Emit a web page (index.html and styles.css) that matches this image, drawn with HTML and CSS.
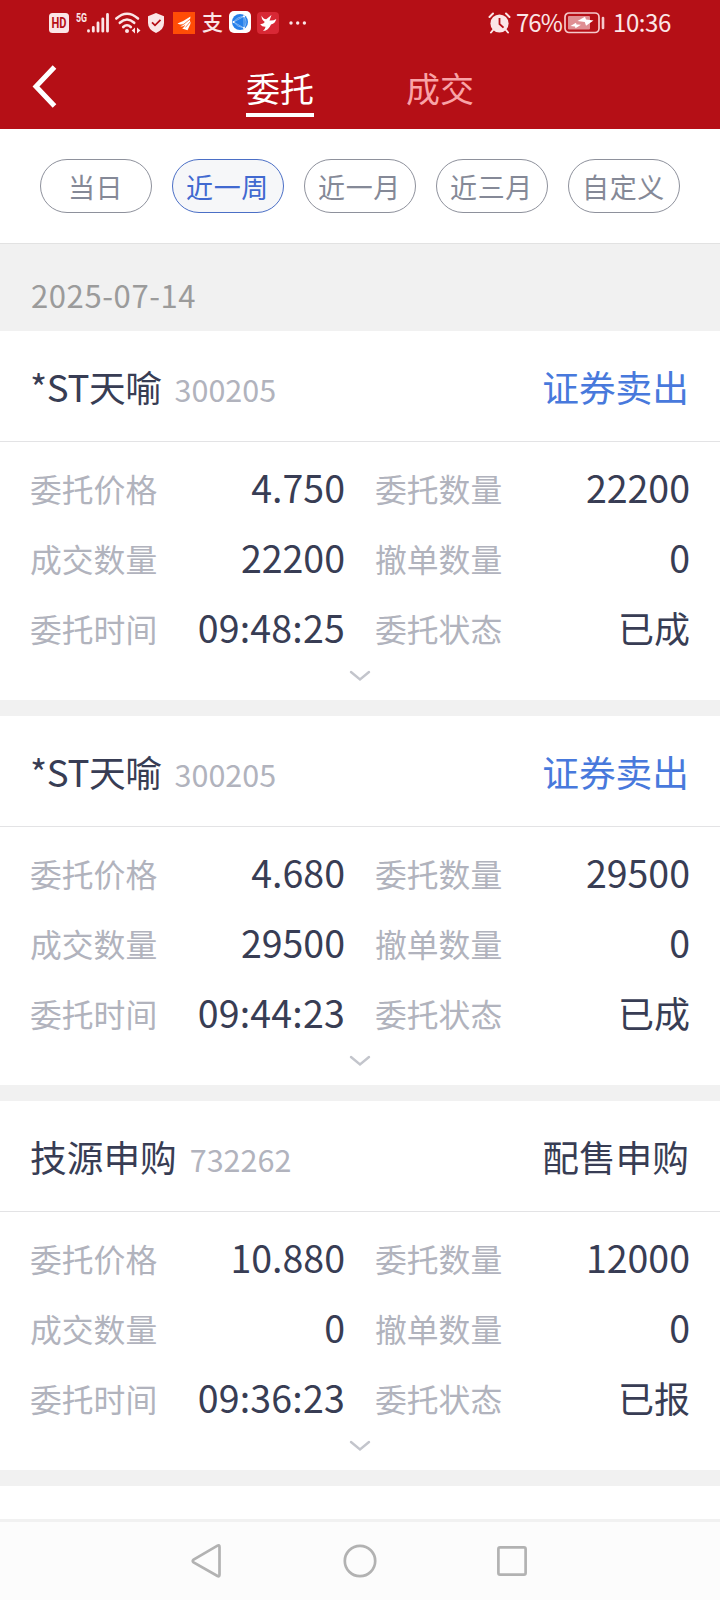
FILE: index.html
```html
<!DOCTYPE html>
<html lang="zh-CN">
<head>
<meta charset="utf-8">
<title>委托</title>
<link rel="stylesheet" href="styles.css">
</head>
<body>
<header class="top">
  <div class="status">
    <svg class="ic-hd" width="20" height="20" viewBox="0 0 20 20"><rect width="20" height="20" rx="3.5" fill="#fbe6e7"/><text class="hd" x="10" y="15" text-anchor="middle" textLength="15" lengthAdjust="spacingAndGlyphs" fill="#b50f16">HD</text></svg>
    <svg class="ic-signal" width="34" height="22" viewBox="0 0 34 22"><text class="gen" x="0" y="9.5" textLength="11" lengthAdjust="spacingAndGlyphs" fill="#fbe6e7">5G</text><g stroke="#fbe6e7" stroke-width="2.8" stroke-linecap="round"><path d="M12.5 18.6v.6M17.3 15.5v3.7M22 11v8.2M26.8 6.8v12.4M31.5 2.5v16.7"/></g></svg>
    <svg class="ic-wifi" width="26" height="22" viewBox="0 0 26 22"><g fill="none" stroke="#fbe6e7" stroke-width="2.6" stroke-linecap="round"><path d="M1.3 6.5Q12 -3 23 6.5M4.8 10.8Q12 4.2 19.2 10.8M8.2 15Q12 11.5 15.8 15"/></g><circle cx="12" cy="19" r="2" fill="#fbe6e7"/><path d="M20 15.5v6l-3.3-3zM22 15.5v6l3.5-3z" fill="#fbe6e7"/></svg>
    <svg class="ic-shield" width="16" height="20" viewBox="0 0 16 20"><path d="M8 0L16 3.3V10Q16 16.5 8 20Q0 16.5 0 10V3.3z" fill="#fbe6e7"/><path d="M4 9.3l3 3 5.5-5.4" fill="none" stroke="#b50f16" stroke-width="1.8"/></svg>
    <svg class="ic-orange" width="22" height="22" viewBox="0 0 22 22"><rect width="22" height="22" fill="#ff4d06"/><path d="M4.5 11.5Q11 9 17.5 4.5L16.8 8.8Q18 9.5 17.4 12L14.5 18.2L9.2 16.5Q11.5 15 12.3 12.7Q10 15 7.3 14.5Q9.6 13.4 10.4 11.5Q8 13.3 4.5 11.5z" fill="#fff"/><path d="M9.5 13.2L17 7.2M12.5 15.4L17.6 9.4" stroke="#ff4d06" stroke-width=".7"/></svg>
    <span class="zhi">支</span>
    <svg class="ic-globe" width="22" height="22" viewBox="0 0 22 22"><rect width="22" height="22" rx="5" fill="#fff"/><circle cx="11" cy="11" r="8" fill="#2680ea"/><path d="M4.5 11L15 5.3V17zM4.5 11Q8 6 15 5.3Q19 11 15 17Q8 16 4.5 11" fill="none" stroke="#a9cff8" stroke-width=".7"/><g fill="#fff"><circle cx="4.5" cy="11" r="1"/><circle cx="15" cy="5.3" r="1"/><circle cx="15" cy="17" r="1"/></g></svg>
    <svg class="ic-red" width="22" height="22" viewBox="0 0 22 22"><rect width="22" height="22" rx="4" fill="#d82835"/><path d="M4.5 3.5Q6 7 9.2 7.2L14.5 3L12.5 8.5Q16 9 19.3 7Q18.2 11.5 14 12.5Q11.5 18.5 6 19Q8 17.5 8.6 14.8Q5 15 3.2 12.2Q7 11.7 7.8 10Q4.5 8 4.5 3.5z" fill="#fff"/></svg>
    <svg class="ic-dots" width="18" height="4" viewBox="0 0 18 4"><g fill="#fbe6e7"><circle cx="2" cy="2" r="1.7"/><circle cx="8.7" cy="2" r="1.7"/><circle cx="15.4" cy="2" r="1.7"/></g></svg>
    <svg class="ic-alarm" width="23" height="22" viewBox="0 0 23 22"><circle cx="11.5" cy="11.5" r="9.1" fill="#fbe6e7"/><path d="M1.5 5L5 1.5M21.5 5L18 1.5M5 18L3 20.5M18 18L20 20.5" stroke="#fbe6e7" stroke-width="2" stroke-linecap="round"/><path d="M11.5 6v6l4 3.6" fill="none" stroke="#b50f16" stroke-width="1.8"/></svg>
    <span class="pct">76%</span>
    <svg class="ic-bat" width="41" height="22" viewBox="0 0 41 22"><rect x="1" y="1" width="34" height="19.5" rx="4" fill="none" stroke="#f5c9cb" stroke-width="1.7"/><rect x="4" y="4" width="22" height="13.5" rx="1" fill="#df8f93"/><path d="M6.5 14L12 10.8L12.5 12.5L17 12.8L11.5 16.3L11 14.4zM13.5 9L21 4.8L22 7.5L29.5 8.5L22 13.8L20.8 10z" fill="#fff"/><path d="M39 6v10" stroke="#f5c9cb" stroke-width="2.6" stroke-linecap="round"/></svg>
    <span class="clock">10:36</span>
  </div>
  <nav class="tabs">
    <svg class="back" width="26" height="44" viewBox="0 0 26 44"><path d="M23.5 2L5 21.5L23.5 41" fill="none" stroke="#fff" stroke-width="5"/></svg>
    <a class="tab tab-on">委托</a>
    <a class="tab">成交</a>
  </nav>
</header>
<section class="filters">
  <button class="pill">当日</button>
  <button class="pill pill-on">近一周</button>
  <button class="pill">近一月</button>
  <button class="pill">近三月</button>
  <button class="pill">自定义</button>
</section>
<div class="date">2025-07-14</div>
<main class="list">
  <article class="card">
    <div class="head"><span class="name latin">*ST天喻</span><span class="code">300205</span><span class="side sell">证券卖出</span></div>
    <div class="grid">
      <div class="cell"><span class="label">委托价格</span><span class="value">4.750</span></div>
      <div class="cell"><span class="label">委托数量</span><span class="value">22200</span></div>
      <div class="cell"><span class="label">成交数量</span><span class="value">22200</span></div>
      <div class="cell"><span class="label">撤单数量</span><span class="value">0</span></div>
      <div class="cell"><span class="label">委托时间</span><span class="value time">09:48:25</span></div>
      <div class="cell"><span class="label">委托状态</span><span class="value zh">已成</span></div>
    </div>
    <svg class="more" width="22" height="12" viewBox="0 0 22 12"><path d="M2 2l9 7.5L20 2" fill="none" stroke="#c3c5cc" stroke-width="2.4" stroke-linecap="round"/></svg>
  </article>
  <article class="card">
    <div class="head"><span class="name latin">*ST天喻</span><span class="code">300205</span><span class="side sell">证券卖出</span></div>
    <div class="grid">
      <div class="cell"><span class="label">委托价格</span><span class="value">4.680</span></div>
      <div class="cell"><span class="label">委托数量</span><span class="value">29500</span></div>
      <div class="cell"><span class="label">成交数量</span><span class="value">29500</span></div>
      <div class="cell"><span class="label">撤单数量</span><span class="value">0</span></div>
      <div class="cell"><span class="label">委托时间</span><span class="value time">09:44:23</span></div>
      <div class="cell"><span class="label">委托状态</span><span class="value zh">已成</span></div>
    </div>
    <svg class="more" width="22" height="12" viewBox="0 0 22 12"><path d="M2 2l9 7.5L20 2" fill="none" stroke="#c3c5cc" stroke-width="2.4" stroke-linecap="round"/></svg>
  </article>
  <article class="card">
    <div class="head"><span class="name">技源申购</span><span class="code">732262</span><span class="side">配售申购</span></div>
    <div class="grid">
      <div class="cell"><span class="label">委托价格</span><span class="value">10.880</span></div>
      <div class="cell"><span class="label">委托数量</span><span class="value">12000</span></div>
      <div class="cell"><span class="label">成交数量</span><span class="value">0</span></div>
      <div class="cell"><span class="label">撤单数量</span><span class="value">0</span></div>
      <div class="cell"><span class="label">委托时间</span><span class="value time">09:36:23</span></div>
      <div class="cell"><span class="label">委托状态</span><span class="value zh">已报</span></div>
    </div>
    <svg class="more" width="22" height="12" viewBox="0 0 22 12"><path d="M2 2l9 7.5L20 2" fill="none" stroke="#c3c5cc" stroke-width="2.4" stroke-linecap="round"/></svg>
  </article>
  <article class="card card-next"></article>
</main>
<footer class="sysnav">
  <svg width="30" height="36" viewBox="0 0 30 36"><path d="M26.5 2.6Q28.5 1.6 28.5 4V31.5Q28.5 34 26.5 33L2.6 19.4Q.8 18 2.6 16.6z" fill="none" stroke="#b2b2b2" stroke-width="2.7"/></svg>
  <svg width="36" height="36" viewBox="0 0 36 36"><circle cx="18" cy="18" r="15.2" fill="none" stroke="#b2b2b2" stroke-width="2.7"/></svg>
  <svg width="32" height="36" viewBox="0 0 32 36"><rect x="2.4" y="4.4" width="27.2" height="27.2" rx="1.6" fill="none" stroke="#b2b2b2" stroke-width="2.7"/></svg>
</footer>
</body>
</html>
```
FILE: styles.css
```css
* { box-sizing: border-box; }
body {
  margin: 0;
  width: 720px;
  height: 1600px;
  overflow: hidden;
  display: flex;
  flex-direction: column;
  background: #f1f1f1;
  color: #383d54;
  font-family: "Noto Sans CJK SC", sans-serif;
}
svg { display: block; flex: none; overflow: visible; }

/* status bar and tabs */
.top { height: 129px; flex: none; background: #b50f16; }
.status {
  display: flex;
  align-items: center;
  height: 46px;
  padding-left: 49px;
  color: #fbe6e7;
  font-size: 24px;
  line-height: 42px;
}
.hd { font: 700 14px Roboto, sans-serif; }
.gen { font: 700 12px Roboto, sans-serif; }
.ic-signal { margin-left: 7px; }
.ic-wifi { margin-left: 5px; }
.ic-shield { margin-left: 7px; }
.ic-orange { margin-left: 9px; }
.zhi { width: 22px; margin-left: 7px; font-size: 21px; font-weight: 500; line-height: 40px; padding-bottom: 4px; }
.ic-globe { margin-left: 5px; margin-bottom: 2px; }
.ic-red { margin-left: 6px; }
.ic-dots { margin-left: 10px; }
.ic-alarm { margin-left: 181px; }
.pct { width: 46px; margin-left: 5px; padding-bottom: 2px; letter-spacing: -1px; white-space: nowrap; }
.ic-bat { margin-left: 2px; }
.clock { margin-left: 8px; padding-bottom: 2px; letter-spacing: -0.4px; }

.tabs { display: flex; align-items: flex-start; height: 83px; padding-left: 31px; }
.back { margin-top: 19px; }
.tab {
  width: 68px;
  height: 71px;
  margin-left: 92px;
  padding-top: 18px;
  color: #f9a3a7;
  font-size: 34px;
  line-height: 48px;
}
.tab-on { margin-left: 189px; color: #fff; border-bottom: 4px solid #fff; }

/* period filter */
.filters {
  display: flex;
  flex: none;
  gap: 20px;
  height: 115px;
  padding: 30px 40px 0;
  background: #fff;
  border-bottom: 1px solid #e2e2e2;
}
.pill {
  width: 112px;
  height: 54px;
  padding: 1px 1px 0 0;
  border: 1px solid #8e919c;
  border-radius: 27px;
  background: #fff;
  color: #858997;
  font: 27px/50px "Noto Sans CJK SC", sans-serif;
  letter-spacing: 0.6px;
}
.pill-on { border-color: #4b6fc6; background: #f6f7f9; color: #4169d0; }

.date {
  flex: none;
  height: 87px;
  padding: 27px 31px 0;
  color: #9b9b9b;
  font-size: 31px;
  line-height: 48px;
  letter-spacing: 0.6px;
}

/* order cards */
.list { display: flex; flex-direction: column; gap: 16px; height: 1188px; overflow: hidden; flex: none; }
.card { flex: none; height: 369px; background: #fff; }
.card-next { height: 33px; }
.head {
  display: flex;
  align-items: baseline;
  height: 111px;
  padding: 29px 30px 0;
  border-bottom: 1px solid #e3e3e5;
  font-size: 36.7px;
  line-height: 52px;
}
.latin { letter-spacing: -0.4px; }
.code { margin-left: 13px; color: #b1b3bd; font-size: 30.5px; }
.side { margin-left: auto; padding-right: 1px; }
.sell { color: #4879dc; }
.grid {
  display: grid;
  grid-template-columns: 315px 315px;
  grid-auto-rows: 70px;
  column-gap: 30px;
  padding: 9px 30px 0;
}
.cell { display: flex; justify-content: space-between; line-height: 70px; }
.label { padding-top: 2px; color: #b1b3bd; font-size: 31.8px; }
.value { padding-top: 1px; font-size: 37.5px; }
.time { letter-spacing: 0.2px; }
.zh { font-size: 36px; }
.more { margin: 9px auto 0; }

/* system navigation */
.sysnav {
  display: flex;
  flex: 1;
  padding: 21px 0 0 191px;
  background: #fcfcfc;
  border-top: 3px solid #f1f1f1;
}
.sysnav svg:nth-child(2) { margin: 0 118px 0 121px; }
```
